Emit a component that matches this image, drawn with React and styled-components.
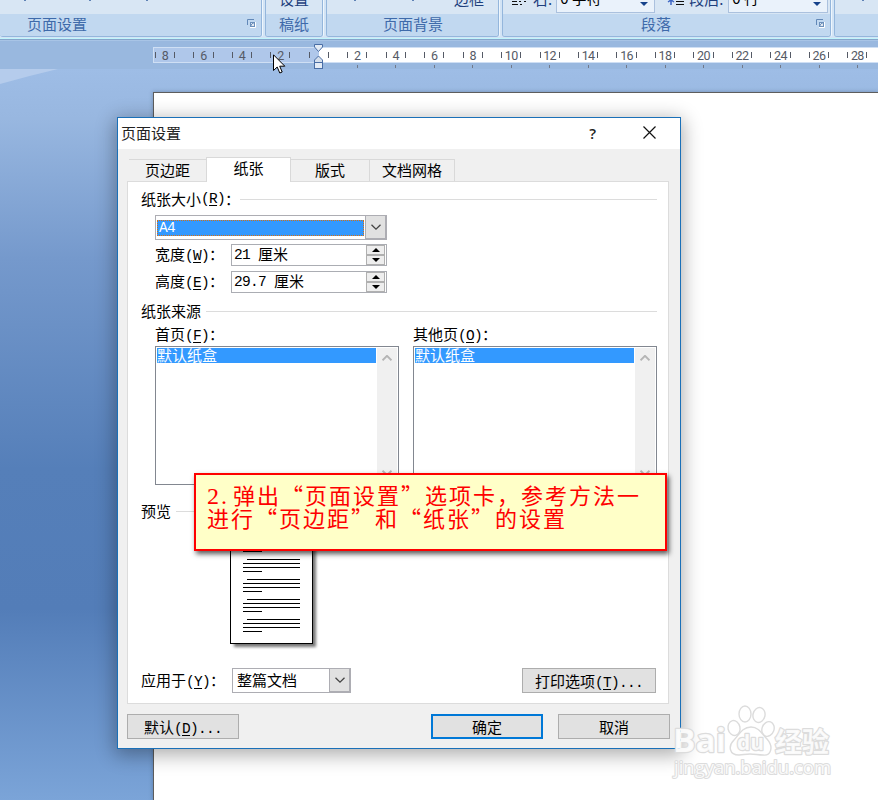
import React from "react";
import styled, { createGlobalStyle, css } from "styled-components";

const cjk = `"Noto Sans CJK SC", "Liberation Sans", sans-serif`;

const GlobalStyle = createGlobalStyle`
  * {
    box-sizing: border-box;
  }
  body {
    margin: 0;
    overflow: hidden;
    font-family: ${cjk};
    font-size: 15px;
    color: #000;
  }
`;

const RULER_NUMBERS = [8, 6, 4, 2, 0, 2, 4, 6, 8, 10, 12, 14, 16, 18, 20, 22, 24, 26, 28];

/* "(R)" with the access key underlined */
function Key({ k }) {
  return (
    <Latin>
      (<u>{k}</u>)
    </Latin>
  );
}

function Chevron({ up, color = "#444", size = 10, weight = 1.3 }) {
  return (
    <svg width={size} height={size * 0.6} viewBox="0 0 10 6">
      <path d={up ? "M0.5 5.3L5 0.9L9.5 5.3" : "M0.5 0.7L5 5.1L9.5 0.7"} fill="none" stroke={color} strokeWidth={weight} />
    </svg>
  );
}

function Launcher() {
  return (
    <svg width="9" height="9" viewBox="0 0 9 9">
      <path d="M0.5 6V0.5H7" fill="none" stroke="#6288b8" />
      <path d="M3 8.5H8.5V3" fill="none" stroke="#fff" />
      <rect x="3" y="3" width="5" height="5" fill="#6c90bb" />
      <path d="M4 4L6.5 6.5M6.5 4.5V6.5H4.5" stroke="#fff" strokeWidth="0.8" fill="none" />
    </svg>
  );
}

function Spinner({ value }) {
  return (
    <SpinBox>
      <Latin>{value}</Latin>厘米
      <SpinButtons>
        <SpinButton>
          <svg width="8" height="4" viewBox="0 0 8 4"><path d="M0 4L4 0L8 4Z" /></svg>
        </SpinButton>
        <SpinButton>
          <svg width="8" height="4" viewBox="0 0 8 4"><path d="M0 0L4 4L8 0Z" /></svg>
        </SpinButton>
      </SpinButtons>
    </SpinBox>
  );
}

function SourceList({ label, k }) {
  return (
    <div>
      <ListLabel>{label}<Key k={k} />：</ListLabel>
      <ListBox>
        <ListItems>
          <ListItem>默认纸盒</ListItem>
        </ListItems>
        <ScrollTrack>
          <Chevron up color="#b5b5b5" weight={2} />
          <Chevron color="#b5b5b5" weight={2} />
        </ScrollTrack>
      </ListBox>
    </div>
  );
}

function Ribbon() {
  return (
    <RibbonBar>
      <Group $width={262} $first>
        <GroupBody>
          <Tip $left={24} />
          <Tip $left={63} />
          <Tip $left={55} />
        </GroupBody>
        <GroupLabel $left={27}>
          页面设置
          <LauncherSlot><Launcher /></LauncherSlot>
        </GroupLabel>
      </Group>
      <Group $width={58}>
        <GroupBody $center>设置</GroupBody>
        <GroupLabel $left={13}>稿纸</GroupLabel>
      </Group>
      <Group $width={173}>
        <GroupBody>
          <Tip $left={27} />
          <Tip $left={56} />
          <RibbonText $left={40}>边框</RibbonText>
        </GroupBody>
        <GroupLabel $left={56}>页面背景</GroupLabel>
      </Group>
      <Group $width={329}>
        <GroupBody>
          <RibbonIcon $left={8} width="16" height="14" viewBox="0 0 16 14">
            <path d="M1 1.5H6M8 1.5H10M1 4.5H7M9 4.5H11M13 1.5H15" stroke="#111" fill="none" />
          </RibbonIcon>
          <RibbonText $left={6}>右:</RibbonText>
          <RibbonInput $left={4} $width={99}>0 字符<DropTip /></RibbonInput>
          <RibbonIcon $left={12} width="17" height="14" viewBox="0 0 17 14">
            <path d="M4 0V5M1 2L4 0L7 2" stroke="#3d66c4" strokeWidth="1.5" fill="none" />
            <path d="M9 1.5H17M9 4.5H17" stroke="#111" />
          </RibbonIcon>
          <RibbonText $left={5}>段后:</RibbonText>
          <RibbonInput $left={5} $width={100}>0 行<DropTip /></RibbonInput>
        </GroupBody>
        <GroupLabel $left={138}>
          段落
          <LauncherSlot><Launcher /></LauncherSlot>
        </GroupLabel>
      </Group>
      <Group $width={60}>
        <GroupBody><Tip $left={27} /></GroupBody>
        <GroupLabel />
      </Group>
    </RibbonBar>
  );
}

function Ruler() {
  return (
    <RulerBar>
      <RulerStrip>
        <RulerCells>
          {RULER_NUMBERS.map((n, i) => (
            <RulerCell key={i}>
              <i />
              <b>{n || ""}</b>
              <i />
            </RulerCell>
          ))}
        </RulerCells>
      </RulerStrip>
      <TabStops>
        {RULER_NUMBERS.slice(5).map((n) => <span key={n} />)}
      </TabStops>
      <IndentMarker width="11" height="26" viewBox="0 0 11 26">
        <path d="M1.5 0.5H9.5V3L5.5 7.5L1.5 3Z" fill="#e3ebf5" stroke="#4a6ea5" />
        <path d="M5.5 12L9.5 16V18.5H1.5V16Z" fill="#d5dfec" stroke="#4a6ea5" />
        <rect x="1.5" y="18.5" width="8" height="6" fill="#e3ebf5" stroke="#4a6ea5" />
      </IndentMarker>
    </RulerBar>
  );
}

function PagePreview() {
  return (
    <svg width="90" height="126" viewBox="0 0 90 126">
      <defs>
        <filter id="soft" x="-10%" y="-10%" width="125%" height="125%">
          <feGaussianBlur stdDeviation="1.8" />
        </filter>
      </defs>
      <rect x="4" y="4" width="82" height="117" fill="#777" filter="url(#soft)" />
      <rect x="0.5" y="0.5" width="82" height="117" fill="#fff" stroke="#000" />
      {[13, 33, 53, 73, 93].map((y) => (
        <path key={y} d={`M17 ${y + 0.5}H70M13 ${y + 4.5}H70M13 ${y + 8.5}H70M13 ${y + 12.5}H32`} stroke="#000" />
      ))}
    </svg>
  );
}

function PageSetupDialog() {
  return (
    <Dialog>
      <TitleBar>
        页面设置
        <TitleIcons>
          <Help>?</Help>
          <svg width="13" height="13" viewBox="0 0 13 13">
            <path d="M0.5 0.5L12.5 12.5M12.5 0.5L0.5 12.5" stroke="#111" strokeWidth="1.2" />
          </svg>
        </TitleIcons>
      </TitleBar>
      <DialogBody>
        <Tabs>
          <Tab $width={78}>页边距</Tab>
          <Tab $width={85} $active>纸张</Tab>
          <Tab $width={79}>版式</Tab>
          <Tab $width={85}>文档网格</Tab>
        </Tabs>
        <Panel>
          <Legend $top={7}>纸张大小<Key k="R" />：</Legend>
          <SizeFields>
            <Combo $width={232}>
              <ComboSelected><Latin>A4</Latin></ComboSelected>
              <ComboButton><Chevron /></ComboButton>
            </Combo>
            <FieldRow $top={4}>
              <FieldLabel>宽度<Key k="W" />：</FieldLabel>
              <Spinner value="21 " />
            </FieldRow>
            <FieldRow $top={4}>
              <FieldLabel>高度<Key k="E" />：</FieldLabel>
              <Spinner value="29.7 " />
            </FieldRow>
          </SizeFields>
          <Legend $top={7} $gap={5}>纸张来源</Legend>
          <SourceRow>
            <SourceList label="首页" k="F" />
            <SourceList label="其他页" k="O" />
          </SourceRow>
          <Legend $top={16} $gap={5}>预览</Legend>
          <PreviewArea><PagePreview /></PreviewArea>
          <ApplyRow>
            <ApplyLabel>应用于<Key k="Y" />：</ApplyLabel>
            <Combo $width={119}>
              <ComboText>整篇文档</ComboText>
              <ComboButton><Chevron /></ComboButton>
            </Combo>
            <PushButton $width={134} $push>打印选项<Latin>(<u>T</u>)...</Latin></PushButton>
          </ApplyRow>
        </Panel>
        <Footer>
          <PushButton $width={112}>默认<Latin>(<u>D</u>)...</Latin></PushButton>
          <PushButton $width={112} $push $primary>确定</PushButton>
          <PushButton $width={112}>取消</PushButton>
        </Footer>
      </DialogBody>
    </Dialog>
  );
}

function BaiduMark() {
  return (
    <Watermark width="170" height="90" viewBox="0 0 170 90">
      <g fill="#fff" fillOpacity="0.85" stroke="#dcdcdc" strokeWidth="1.4" strokeLinejoin="round">
        <ellipse cx="63" cy="34" rx="6" ry="7.5" transform="rotate(-12 63 34)" />
        <ellipse cx="74" cy="20" rx="6" ry="8" />
        <ellipse cx="88" cy="21" rx="6" ry="7.5" transform="rotate(12 88 21)" />
        <ellipse cx="97" cy="35" rx="6" ry="7.5" transform="rotate(20 97 35)" />
        <path d="M80 33C88 33 91 40 96 45C103 53 100 62 92 61C87 61 84 60 79 60C74 60 72 61 68 61C58 61 57 52 63 46C68 41 71 33 80 33Z" />
        <g style={{ paintOrder: "stroke" }} strokeWidth="2.4" fontWeight="700">
          <text x="2" y="58" fontFamily="Open Sans" fontSize="33" textLength="53" lengthAdjust="spacingAndGlyphs">Bai</text>
          <text x="66" y="56" fontFamily="Open Sans" fontSize="21" textLength="27" lengthAdjust="spacingAndGlyphs">du</text>
          <text x="104" y="58" fontFamily="Noto Sans CJK SC" fontSize="27" textLength="54" lengthAdjust="spacingAndGlyphs">经验</text>
          <text x="3" y="80" fontFamily="Open Sans" fontWeight="400" fontSize="18" textLength="157" lengthAdjust="spacingAndGlyphs" strokeWidth="2">jingyan.baidu.com</text>
        </g>
      </g>
    </Watermark>
  );
}

function App() {
  return (
    <Screen lang="zh-CN">
      <GlobalStyle />
      <Ribbon />
      <Ruler />
      <Workspace>
        <Swoosh width="60" height="16" viewBox="0 0 60 16">
          <path d="M0 0H58Q28 7 0 15Z" fill="#b5ccec" />
        </Swoosh>
        <Paper />
      </Workspace>
      <PageSetupDialog />
      <Callout>
        <div><Num>2.</Num>弹出“页面设置”选项卡，参考方法一</div>
        <div>进行“页边距”和“纸张”的设置</div>
      </Callout>
      <BaiduMark />
      <Cursor width="13" height="20" viewBox="0 0 13 20">
        <path d="M0.5 0.8V16.5L4.2 13L6.8 19L9.2 18L6.7 12.2H11.8Z" fill="#fff" stroke="#000" />
      </Cursor>
    </Screen>
  );
}

const Screen = styled.div`
  position: relative;
  display: flex;
  flex-direction: column;
  width: 878px;
  height: 800px;
  overflow: hidden;
  background: #9dbce5;
`;

const Latin = styled.span`
  font-family: "Liberation Mono", monospace;
  font-size: 14.5px;
  letter-spacing: -0.7px;
  line-height: 1;
  white-space: pre;
  u {
    text-underline-offset: 2px;
  }
`;

/* ribbon */
const RibbonBar = styled.div`
  display: flex;
  flex: none;
  gap: 3px;
  height: 41px;
  padding-bottom: 4px;
  overflow: hidden;
  background: linear-gradient(#d3e4f5 0 38px, #c0f5fb 38px 39px, #86a5cb 39px 40px, #a8c4e6 40px);
`;

const Group = styled.div`
  flex: none;
  width: ${(p) => p.$width}px;
  height: 37px;
  border: 1px solid #94b6dc;
  border-top: 0;
  border-left-width: ${(p) => (p.$first ? 0 : 1)}px;
  border-radius: 0 0 3px 3px;
  overflow: hidden;
  box-shadow: 1px 0 #eef6fd;
`;

const GroupBody = styled.div`
  display: flex;
  align-items: flex-end;
  justify-content: ${(p) => (p.$center ? "center" : "flex-start")};
  height: 14px;
  padding-bottom: ${(p) => (p.$center ? 7 : 0)}px;
  line-height: 17px;
  color: #1e3f7d;
  background: #d8e6f4;
`;

const GroupLabel = styled.div`
  display: flex;
  align-items: center;
  height: 22px;
  padding: 0 5px 0 ${(p) => p.$left}px;
  line-height: 20px;
  padding-bottom: 2px;
  color: #3e6aaa;
  background: #c1d8f0;
`;

const LauncherSlot = styled.span`
  display: flex;
  margin-left: auto;
  padding-bottom: 2px;
`;

const Tip = styled.span`
  flex: none;
  align-self: flex-start;
  width: 2px;
  height: 1px;
  margin-left: ${(p) => p.$left}px;
  background: #5f82b5;
`;

const RibbonText = styled.span`
  flex: none;
  margin-left: ${(p) => p.$left}px;
  padding-bottom: 7px;
`;

const RibbonIcon = styled.svg`
  flex: none;
  margin-left: ${(p) => p.$left}px;
`;

const RibbonInput = styled.span`
  display: flex;
  flex: none;
  align-items: center;
  justify-content: space-between;
  width: ${(p) => p.$width}px;
  height: 24px;
  margin: 0 0 1px ${(p) => p.$left}px;
  padding: 0 6px 8px 3px;
  border: 1px solid #abc1de;
  color: #000;
  background: #eaf2fb;
`;

const DropTip = styled.span`
  border: 4px solid transparent;
  border-top-color: #15428b;
  border-bottom: 0;
  margin-top: 13px;
`;

/* ruler */
const RulerBar = styled.div`
  position: relative;
  flex: none;
  height: 28px;
  padding: 6px 0 0 153px;
  background: #99b8df;
`;

const RulerStrip = styled.div`
  height: 16px;
  overflow: hidden;
  border: 1px solid #cfdff4;
  border-right: 0;
  background: linear-gradient(90deg, #afc7ea 165px, #fff 165px);
`;

const RulerCells = styled.div`
  display: flex;
  margin-left: -8.3px;
`;

const RulerCell = styled.div`
  display: flex;
  flex: none;
  align-items: center;
  justify-content: center;
  width: 38.47px;
  height: 14px;
  color: #555a66;
  i {
    width: 1px;
    height: 6px;
    background: #555a66;
  }
  b {
    width: 18.2px;
    font: 12.5px Roboto, sans-serif;
    letter-spacing: -0.6px;
    text-align: center;
  }
`;

const TabStops = styled.div`
  display: flex;
  gap: 37.47px;
  padding: 2px 0 0 204px;
  span {
    flex: none;
    width: 1px;
    height: 3px;
    background: #71798a;
  }
`;

const IndentMarker = styled.svg`
  position: absolute;
  left: 313px;
  top: 3px;
`;

/* document area */
const Workspace = styled.div`
  position: relative;
  display: flex;
  flex: 1;
  padding: 23px 0 0 153px;
  background: linear-gradient(#9ebde6 0, #98b7e0 50px, #7599cc 190px, #557fb9 400px, #537db8 540px, #7ba4d8 731px);
`;

const Swoosh = styled.svg`
  position: absolute;
  left: 0;
  top: 0;
`;

const Paper = styled.div`
  flex: 1;
  border-top: 1px solid #5d5d5d;
  border-left: 1px solid #5d5d5d;
  background: #fff;
  box-shadow: 0 0 4px rgba(50, 70, 100, 0.4);
`;

/* dialog */
const Dialog = styled.div`
  position: absolute;
  left: 117px;
  top: 117px;
  width: 564px;
  height: 632px;
  border: 1px solid #1a70b8;
  background: #f0f0f0;
  box-shadow: 0 4px 18px 2px rgba(0, 0, 0, 0.32);
`;

const TitleBar = styled.div`
  display: flex;
  align-items: center;
  height: 31px;
  padding: 0 24px 2px 3px;
  line-height: 20px;
  color: #222;
  background: #fff;
`;

const TitleIcons = styled.span`
  display: flex;
  align-items: center;
  gap: 47px;
  margin-left: auto;
`;

const Help = styled.span`
  font: 600 15px "Open Sans", sans-serif;
`;

const DialogBody = styled.div`
  padding: 8px 10px 0 9px;
`;

const Tabs = styled.div`
  display: flex;
  align-items: flex-end;
  height: 24px;
  padding-left: 2px;
`;

const Tab = styled.div`
  width: ${(p) => p.$width}px;
  height: 22px;
  line-height: 20px;
  text-align: center;
  border: 1px solid #d9d9d9;
  border-width: 1px 1px 0 0;
  ${(p) =>
    p.$active &&
    css`
      position: relative;
      height: 25px;
      margin: 0 0 -1px -1px;
      border-left-width: 1px;
      background: #fff;
    `}
`;

const Panel = styled.div`
  width: 542px;
  height: 523px;
  border: 1px solid #dcdcdc;
  background: #fff;
`;

const Legend = styled.div`
  display: flex;
  align-items: center;
  height: 20px;
  margin: ${(p) => p.$top}px 11px 0 13px;
  line-height: 20px;
  white-space: nowrap;
  &::after {
    content: "";
    flex: 1;
    height: 1px;
    margin-left: ${(p) => p.$gap || 0}px;
    background: #dcdcdc;
  }
`;

const SizeFields = styled.div`
  padding: 6px 0 0 27px;
`;

const Combo = styled.div`
  display: flex;
  width: ${(p) => p.$width}px;
  height: 25px;
  border: 1px solid #adadb3;
`;

const ComboSelected = styled.div`
  display: flex;
  align-items: center;
  flex: 1;
  height: 16px;
  margin: 4px 1px 0;
  padding-left: 2px;
  outline: 1px dotted #d9700f;
  outline-offset: -1px;
  color: #fff;
  background: #3399ff;
`;

const ComboText = styled.div`
  flex: 1;
  padding-left: 4px;
  line-height: 22px;
`;

const ComboButton = styled.div`
  display: flex;
  align-items: center;
  justify-content: center;
  width: 21px;
  border: 1px solid #adadb3;
  border-top-width: 0;
  background: #e1e1e1;
`;

const FieldRow = styled.div`
  display: flex;
  height: 23px;
  margin-top: ${(p) => p.$top}px;
`;

const FieldLabel = styled.div`
  width: 76px;
  line-height: 20px;
  white-space: nowrap;
`;

const SpinBox = styled.div`
  display: flex;
  width: 156px;
  height: 22px;
  padding-left: 2px;
  border: 1px solid #abadb3;
  line-height: 18px;
  ${Latin} {
    line-height: 20px;
  }
`;

const SpinButtons = styled.span`
  display: flex;
  flex-direction: column;
  margin-left: auto;
  padding: 0 1px 0 0;
`;

const SpinButton = styled.span`
  display: flex;
  flex: 1;
  align-items: center;
  justify-content: center;
  width: 19px;
  border: 1px solid #b0b0b0;
  background: #eee;
`;

const SourceRow = styled.div`
  display: flex;
  gap: 14px;
  padding: 4px 0 0 27px;
`;

const ListLabel = styled.div`
  height: 21px;
  line-height: 17px;
`;

const ListBox = styled.div`
  display: flex;
  width: 244px;
  height: 139px;
  padding: 1px;
  border: 1px solid #828790;
`;

const ListItems = styled.div`
  flex: 1;
`;

const ListItem = styled.div`
  height: 15px;
  line-height: 14px;
  color: #fff;
  background: #3399ff;
`;

const ScrollTrack = styled.div`
  display: flex;
  flex-direction: column;
  align-items: center;
  justify-content: space-between;
  width: 20px;
  padding: 7px 0;
  margin-left: 1px;
  background: #f0f0f0;
`;

const PreviewArea = styled.div`
  height: 147px;
  padding: 5px 0 0 102px;
`;

const ApplyRow = styled.div`
  display: flex;
  padding: 0 12px 0 13px;
`;

const ApplyLabel = styled.div`
  width: 91px;
  line-height: 23px;
  white-space: nowrap;
`;

const PushButton = styled.button`
  width: ${(p) => p.$width}px;
  height: 25px;
  margin-left: ${(p) => (p.$push ? "auto" : "0")};
  padding: 0;
  border: ${(p) => (p.$primary ? "2px solid #0078d7" : "1px solid #adadad")};
  font: inherit;
  line-height: 20px;
  color: #000;
  background: #e1e1e1;
`;

const Footer = styled.div`
  display: flex;
  gap: 15px;
  width: 543px;
  padding-top: 10px;
`;

/* overlays */
const Callout = styled.div`
  position: absolute;
  left: 194px;
  top: 473px;
  width: 473px;
  height: 78px;
  padding: 8px 0 0 11px;
  border: 2px solid #fe0000;
  font-size: 22px;
  line-height: 23px;
  letter-spacing: 2px;
  white-space: nowrap;
  color: #fe0000;
  background: #ffffc8;
  box-shadow: 2px 3px 5px rgba(0, 0, 0, 0.65);
`;

const Num = styled.span`
  display: inline-block;
  width: 26px;
  font: 24px/20px "Liberation Serif", serif;
`;

const Watermark = styled.svg`
  position: absolute;
  left: 671px;
  top: 694px;
`;

const Cursor = styled.svg`
  position: absolute;
  left: 273px;
  top: 54px;
`;

export default App;
